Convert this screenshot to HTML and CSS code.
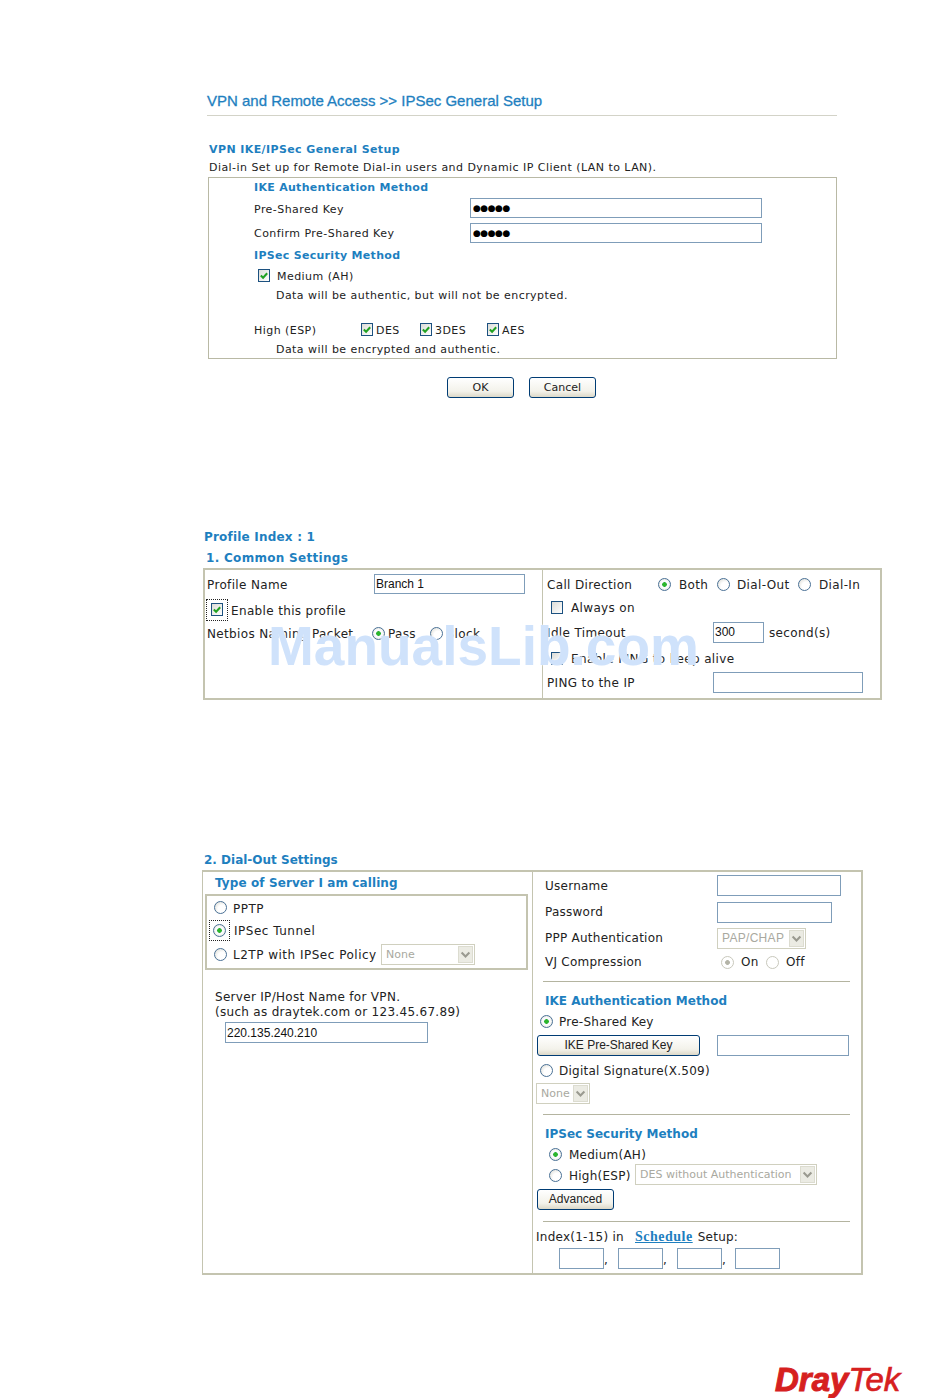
FILE: index.html
```html
<!DOCTYPE html>
<html lang="en">
<head>
<meta charset="utf-8">
<title>IPSec General Setup</title>
<link rel="stylesheet" href="styles.css">
</head>
<body>
<div class="page">

<section class="s1">
  <h1 class="title">VPN and Remote Access &gt;&gt; IPSec General Setup</h1>
  <h2 class="h sub">VPN IKE/IPSec General Setup</h2>
  <p class="note">Dial-in Set up for Remote Dial-in users and Dynamic IP Client (LAN to LAN).</p>
  <div class="box1">
    <div class="r h">IKE Authentication Method</div>
    <div class="r"><span class="lab1">Pre-Shared Key</span><input class="tx key" value="&#9679;&#9679;&#9679;&#9679;&#9679;"></div>
    <div class="r"><span class="lab1">Confirm Pre-Shared Key</span><input class="tx key" value="&#9679;&#9679;&#9679;&#9679;&#9679;"></div>
    <div class="r h">IPSec Security Method</div>
    <div class="r"><span class="cb on cb-med"><svg viewBox="1 1 11 11"><path d="M3 6.5l2.5 2.5 4.5-5" /></svg></span><span>Medium (AH)</span></div>
    <div class="r ind">Data will be authentic, but will not be encrypted.</div>
    <div class="gap"></div>
    <div class="r">
      <span class="lab-high">High (ESP)</span>
      <span class="cb on"><svg viewBox="1 1 11 11"><path d="M3 6.5l2.5 2.5 4.5-5" /></svg></span><span class="opt o-des">DES</span>
      <span class="cb on"><svg viewBox="1 1 11 11"><path d="M3 6.5l2.5 2.5 4.5-5" /></svg></span><span class="opt o-3des">3DES</span>
      <span class="cb on"><svg viewBox="1 1 11 11"><path d="M3 6.5l2.5 2.5 4.5-5" /></svg></span><span class="opt">AES</span>
    </div>
    <div class="r ind">Data will be encrypted and authentic.</div>
  </div>
  <div class="actions">
    <button class="btn b-ok">OK</button>
    <button class="btn b-ok">Cancel</button>
  </div>
</section>

<section class="s2">
  <h2 class="h idx">Profile Index : 1</h2>
  <h2 class="h h-common">1. Common Settings</h2>
  <div class="box2">
    <div class="c2l">
      <div class="r"><span class="w167">Profile Name</span><input class="tx w151" value="Branch 1"></div>
      <div class="r r-en"><span class="focus"><span class="cb on"><svg viewBox="1 1 11 11"><path d="M3 6.5l2.5 2.5 4.5-5" /></svg></span></span><span class="en">Enable this profile</span></div>
      <div class="r"><span class="w165">Netbios Naming Packet</span><span class="rd on"></span><span class="pass">Pass</span><span class="rd"></span><span class="block">Block</span></div>
    </div>
    <div class="c2r">
      <div class="r"><span class="w111">Call Direction</span><span class="rd on"></span><span class="both">Both</span><span class="rd"></span><span class="dout">Dial-Out</span><span class="rd"></span><span class="din">Dial-In</span></div>
      <div class="r r-cb"><span class="cb"></span><span class="cb-t">Always on</span></div>
      <div class="r"><span class="w166">Idle Timeout</span><input class="tx w51" value="300"><span class="sec">second(s)</span></div>
      <div class="r r-cb"><span class="cb"></span><span class="cb-t">Enable PING to keep alive</span></div>
      <div class="r"><span class="w166">PING to the IP</span><input class="tx w150"></div>
    </div>
  </div>
</section>

<section class="s3">
  <h2 class="h h-dial">2. Dial-Out Settings</h2>
  <div class="box3">
    <div class="c3l">
      <div class="h type">Type of Server I am calling</div>
      <div class="inner">
        <div class="r r-srv"><span class="rd"></span><span class="srv">PPTP</span></div>
        <div class="r r-foc"><span class="focus f-rd"><span class="rd on"></span></span><span class="srv-f">IPSec Tunnel</span></div>
        <div class="r r-srv"><span class="rd"></span><span class="srv w148">L2TP with IPSec Policy</span><span class="sel w94"><span class="sv">None</span><span class="ar"><svg viewBox="0 0 10 10"><path d="M2 3.5l3 3 3-3"/></svg></span></span></div>
      </div>
      <p class="srvhelp">Server IP/Host Name for VPN.<br>(such as draytek.com or 123.45.67.89)</p>
      <input class="tx w203 srvip" value="220.135.240.210">
    </div>
    <div class="c3r">
      <div class="r h27 p12 top"><span class="w172">Username</span><input class="tx w124"></div>
      <div class="r h26 p12 top"><span class="w172">Password</span><input class="tx w115"></div>
      <div class="r h26 p12 top"><span class="w172">PPP Authentication</span><span class="sel w89"><span class="sv lib">PAP/CHAP</span><span class="ar"><svg viewBox="0 0 10 10"><path d="M2 3.5l3 3 3-3"/></svg></span></span></div>
      <div class="r h22 p12 top"><span class="w176">VJ Compression</span><span class="rd dis on"></span><span class="on-t">On</span><span class="rd dis"></span><span class="off-t">Off</span></div>
      <hr class="rule">
      <div class="r h20 p12 h">IKE Authentication Method</div>
      <div class="r h22 p7"><span class="rd on"></span><span class="g6">Pre-Shared Key</span></div>
      <div class="r h27 p4"><button class="btn lib12 w163">IKE Pre-Shared Key</button><input class="tx w132 ml17"></div>
      <div class="r h22 p7"><span class="rd"></span><span class="g6">Digital Signature(X.509)</span></div>
      <div class="r h25 p3"><span class="sel w54"><span class="sv">None</span><span class="ar"><svg viewBox="0 0 10 10"><path d="M2 3.5l3 3 3-3"/></svg></span></span></div>
      <hr class="rule">
      <div class="r h21 p12 h h-sec">IPSec Security Method</div>
      <div class="r h20 p16"><span class="rd on"></span><span class="g7">Medium(AH)</span></div>
      <div class="r h22 p16"><span class="rd"></span><span class="g7 w66">High(ESP)</span><span class="sel w182 up"><span class="sv">DES without Authentication</span><span class="ar"><svg viewBox="0 0 10 10"><path d="M2 3.5l3 3 3-3"/></svg></span></span></div>
      <div class="r h27 p4"><button class="btn lib12 w77">Advanced</button></div>
      <hr class="rule rule-t">
      <div class="r h16 p3 index"><span class="i-a">Index(1-15) in</span><a class="link" href="#">Schedule</a><span>Setup:</span></div>
      <div class="r sched">
        <input class="tx w45"><span class="cm">,</span>
        <input class="tx w45"><span class="cm">,</span>
        <input class="tx w45"><span class="cm cm13">,</span>
        <input class="tx w45">
      </div>
    </div>
  </div>
</section>

<div class="logo"><span class="dray">Dray</span><span class="tek">Tek</span></div>

<div class="wm">ManualsLib.com</div>
</div>
</body>
</html>
```
FILE: styles.css
```css
* { box-sizing: border-box; }
html, body { margin: 0; padding: 0; background: #fff; }
.page {
  position: relative;
  width: 950px;
  height: 1398px;
  overflow: hidden;
  padding-top: 90px;
  font: 11px "DejaVu Sans", Verdana, sans-serif;
  color: #222;
}
h1, h2, p { margin: 0; font-weight: normal; }
button, input { font: inherit; margin: 0; letter-spacing: 0; }
.h { font-weight: bold; color: #1e7fbf; }
.r { display: flex; align-items: center; white-space: nowrap; }
.r > span:not(.cb):not(.rd):not(.focus):not(.sel) { padding-top: 2px; }
.r.h, .r.ind { padding-top: 2px; }
.box1 .r.h, .r.h-sec { padding-top: 0; }
.r.top > span:not(.cb):not(.rd):not(.focus):not(.sel) { padding-top: 0; }

/* form controls */
.tx {
  display: block;
  height: 21px;
  border: 1px solid #7f9db9;
  background: #fff;
  padding: 0 1px;
  color: #111;
  font: 12px "Liberation Sans", Arial, sans-serif;
  outline: 0;
}
.key { width: 292px; height: 20px; font: 9px "DejaVu Sans", sans-serif; letter-spacing: -.5px; padding: 0 2px; color: #000; }
.btn {
  display: block;
  height: 21px;
  border: 1px solid #003c74;
  border-radius: 3px;
  background: linear-gradient(#fff, #f3f2ea 70%, #dcd8c8);
  color: #222;
  padding: 0 0 1px;
  text-align: center;
}
.cb {
  flex: none;
  display: block;
  width: 12px;
  height: 13px;
  border: 1px solid #1c5180;
  background: linear-gradient(135deg, #dcdcd7, #fff);
}
.cb svg { display: block; width: 100%; height: 100%; }
.cb path { fill: none; stroke: #21a121; stroke-width: 2.2; }
.rd {
  flex: none;
  display: block;
  width: 13px;
  height: 13px;
  border-radius: 50%;
  border: 1px solid #4a7196;
  background: radial-gradient(circle at 65% 65%, #fff 40%, #d6d6ce);
}
.rd.on { background: radial-gradient(circle, #2cb52c 0, #2cb52c 2px, #eef 2.6px, #fff 3.4px, #d6d6ce); }
.rd.dis { border-color: #c8c8bc; background: #fff; }
.rd.dis.on { background: radial-gradient(circle, #b4b4a8 0, #b4b4a8 2px, #fff 2.8px); }
.sel {
  flex: none;
  display: flex;
  align-items: stretch;
  height: 21px;
  border: 1px solid #d0d0bf;
  padding: 1px;
  background: #fff;
  color: #a9a9a0;
  font-size: 11px;
  letter-spacing: 0;
}
.sv { flex: 1; padding-left: 3px; line-height: 17px; overflow: hidden; }
.lib { font: 12px/17px "Liberation Sans", Arial, sans-serif; letter-spacing: .3px; }
.ar { flex: none; width: 15px; background: #ebebe3; border: 1px solid #dcdcd0; }
.ar svg { display: block; width: 100%; height: 100%; }
.ar path { fill: none; stroke: #9a9a90; stroke-width: 1.6; }
.focus {
  flex: none;
  display: flex;
  align-items: center;
  justify-content: center;
  border: 1px dotted #222;
}
.lib12 { font: 12px "Liberation Sans", Arial, sans-serif; padding-bottom: 2px; }

/* section 1 */
.s1 { margin-left: 207px; width: 630px; }
.title {
  height: 26px;
  border-bottom: 1px solid #d3d3c8;
  font: 15px/22px "Liberation Sans", Arial, sans-serif;
  color: #1e7fbf;
  -webkit-text-stroke: 0.3px #1e7fbf;
}
.sub { margin-top: 24px; padding-left: 2px; height: 18px; line-height: 20px; font-size: 11px; letter-spacing: .4px; }
.note { padding-left: 2px; height: 19px; line-height: 20px; letter-spacing: .45px; }
.box1 {
  margin-left: 1px;
  width: 629px;
  height: 182px;
  border: 1px solid #b9b9a5;
  display: grid;
  grid-template-rows: 19px 22px 27px 19px 20px 19px 15px 20px 19px;
  padding-left: 45px;
  letter-spacing: .45px;
}
.box1 .h { letter-spacing: .3px; }
.lab1 { width: 216px; }
.cb-med { margin: 0 7px 0 4px; }
.ind { padding-left: 22px; }
.lab-high { width: 107px; }
.opt { margin-left: 3px; }
.o-des { width: 44px; }
.o-3des { width: 52px; }
.actions { display: flex; gap: 15px; margin: 18px 0 0 240px; }
.b-ok { width: 67px; }

/* section 2 */
.s2 { margin: 129px 0 0 203px; }
.idx { height: 21px; line-height: 20px; padding-left: 1px; font-size: 12px; letter-spacing: .2px; }
.h-common { height: 20px; line-height: 20px; padding-left: 3px; font-size: 12px; letter-spacing: .3px; }
.box2 {
  width: 679px;
  height: 132px;
  border: 2px solid #c4c4b0;
  display: grid;
  grid-template-columns: 337px 1fr;
  font-size: 12px;
  letter-spacing: .35px;
}
.c2l { display: grid; grid-template-rows: 28px 23px 24px; align-content: start; padding-left: 2px; }
.c2r { display: grid; grid-template-rows: 28px 18px 32px 20px 28px; align-content: start; border-left: 1px solid #c4c4b0; padding-left: 4px; }
.w167 { width: 167px; }
.w165 { width: 165px; }
.w151 { width: 151px; height: 20px; }
.r-en { margin-left: -1px; }
.r-en .focus { width: 22px; height: 22px; }
.en { margin-left: 3px; }
.pass { width: 42px; margin-left: 3px; }
.block { margin-left: 3px; }
.w111 { width: 111px; }
.both { width: 38px; margin-left: 8px; }
.dout { width: 61px; margin-left: 7px; }
.din { margin-left: 8px; }
.r-cb { padding-left: 4px; }
.cb-t { margin-left: 8px; }
.w166 { width: 166px; }
.w51 { width: 51px; }
.w150 { width: 150px; }
.sec { margin-left: 5px; }

/* section 3 */
.s3 { margin: 150px 0 0 202px; }
.h-dial { height: 20px; line-height: 20px; padding-left: 2px; font-size: 12px; }
.box3 {
  width: 661px;
  height: 405px;
  border: 2px solid #c4c4b0;
  border-width: 2px 2px 2px 1px;
  display: grid;
  grid-template-columns: 329px 1fr;
}
.c3l { padding-left: 1px; }
.type { height: 22px; line-height: 22px; padding-left: 11px; font-size: 12px; letter-spacing: .1px; }
.inner { margin-left: 1px; width: 323px; height: 76px; border: 2px solid #c4c4b0; font-size: 12px; letter-spacing: .5px; }
.r-srv { padding-left: 7px; height: 23px; }
.r-srv:last-child { height: 26px; }
.srv { margin-left: 6px; }
.r-foc { padding-left: 2px; height: 22px; }
.f-rd { width: 21px; height: 21px; }
.srv-f { margin-left: 4px; }
.w148 { width: 148px; }
.w94 { width: 94px; }
.srvhelp { margin: 20px 0 0 11px; line-height: 15px; font-size: 12px; letter-spacing: .3px; }
.w203 { width: 203px; }
.srvip { margin: 2px 0 0 21px; }

.c3r { border-left: 1px solid #c4c4b0; font-size: 12px; letter-spacing: .25px; }
.c3r .h { letter-spacing: 0; }
.h27 { height: 27px; }
.h26 { height: 26px; }
.h25 { height: 25px; }
.h22 { height: 22px; }
.h21 { height: 21px; }
.h20 { height: 20px; }
.h16 { height: 16px; }
.p12 { padding-left: 12px; }
.p16 { padding-left: 16px; }
.p7 { padding-left: 7px; }
.p4 { padding-left: 4px; }
.p3 { padding-left: 3px; }
.w172 { width: 172px; }
.w176 { width: 176px; }
.w124 { width: 124px; }
.w115 { width: 115px; }
.w89 { width: 89px; }
.on-t { width: 25px; margin-left: 7px; }
.off-t { margin-left: 7px; }
.rule { margin: 8px 0 8px 10px; width: 307px; height: 1px; border: 0; background: #b4b4a0; }
.rule-t { margin-bottom: 6px; }
.g6 { margin-left: 6px; }
.g7 { margin-left: 7px; }
.w163 { width: 163px; }
.w132 { width: 132px; }
.ml17 { margin-left: 17px; }
.w54 { width: 54px; }
.w66 { width: 66px; }
.w182 { width: 182px; }
.up { margin-top: -2px; }
.w77 { width: 77px; }
.i-a { width: 99px; }
.link { color: #1e7fbf; font: bold 14px "Liberation Serif", serif; letter-spacing: .5px; margin-right: 5px; padding-top: 2px; }
.sched { margin: 4px 0 0 26px; }
.w45 { width: 45px; }
.cm { width: 14px; padding-top: 8px; }
.cm13 { width: 13px; }

/* brand + watermark */
.logo {
  margin: 88px 0 0 775px;
  font: italic 33px/33px "Liberation Sans", Arial, sans-serif;
  color: #d6201f;
  white-space: nowrap;
}
.dray { font-weight: bold; -webkit-text-stroke: 1px #d6201f; }
.tek { margin-left: 0; -webkit-text-stroke: .7px #d6201f; }
.wm {
  position: absolute;
  left: 268px;
  top: 616px;
  font: bold 55px/60px "Liberation Sans", Arial, sans-serif;
  color: #cfe2fb;
  white-space: nowrap;
  text-shadow: 0 0 2px #fff;
}
```
